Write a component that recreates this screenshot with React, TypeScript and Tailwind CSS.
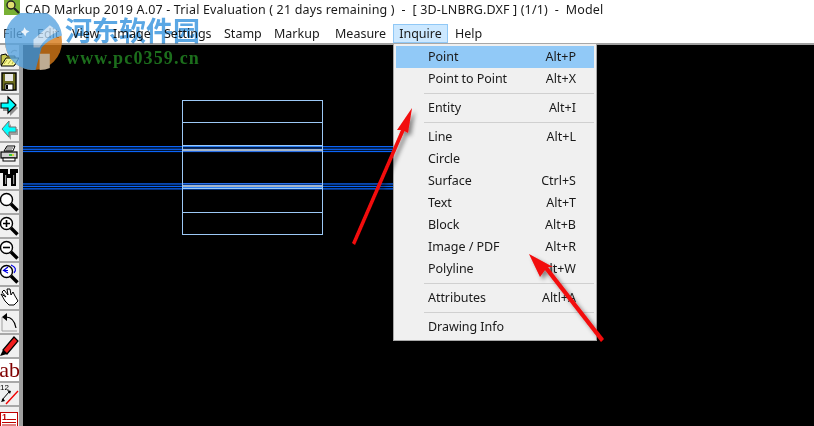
import React from "react";

const font = { fontFamily: '"Noto Sans", "Open Sans", sans-serif' };

function Btn({ children }: { children: React.ReactNode }) {
  return (
    <div className="h-[24px] w-[19px] shrink-0 bg-[#f0f0f0] border-b-2 border-[#a8a8a8] overflow-hidden">
      <svg width="19" height="22" viewBox="0 0 19 22" className="block">{children}</svg>
    </div>
  );
}

const Mag = ({ inner }: { inner?: React.ReactNode }) => (
  <g>
    <circle cx="6.5" cy="8.5" r="6" fill="#fff" stroke="#000" strokeWidth="1.4" />
    <path d="M11 13 L17.5 19.5" stroke="#000" strokeWidth="3.4" />
    {inner}
  </g>
);

function Toolbar() {
  return (
    <div className="w-[23px] shrink-0 flex flex-col pt-[2px] bg-[#f0f0f0] border-r-[4px] border-[#a0a0a0] overflow-hidden">
      <Btn>
        <path d="M11 6 Q13 2 17 4" fill="none" stroke="#999" strokeWidth="1.2" />
        <path d="M1 8 L6 7 L7 9 H15 V18 H1 Z" fill="#c8c850" stroke="#000" />
        <path d="M1 19 L6 11 H19 L14 19 Z" fill="#f8f890" stroke="#000" />
        <path d="M4 17 L7 13 M8 17 L11 13 M12 17 L14 13" stroke="#b0b040" />
      </Btn>
      <Btn>
        <rect x="2" y="2" width="14" height="17" fill="#6b6b20" stroke="#000" strokeWidth="1.4" />
        <rect x="5" y="3" width="8" height="7" fill="#e8e8e8" />
        <rect x="5" y="13" width="8" height="6" fill="#fff" stroke="#000" />
        <rect x="6" y="14" width="2" height="4" fill="#000" />
      </Btn>
      <Btn>
        <path d="M3 10 H10 V5 L18 13 L10 21 V16 H3 Z" fill="#909090" />
        <path d="M1 8 H8 V2 L16 10 L8 18 V13 H1 Z" fill="#00ffff" stroke="#000" strokeWidth="1.2" />
      </Btn>
      <Btn>
        <path d="M18 10 H11 V5 L4 13 L11 21 V16 H18 Z" fill="#a0a0a0" />
        <path d="M16 8 H9 V2 L2 10 L9 18 V13 H16 Z" fill="#00ffff" stroke="#707070" strokeWidth="1" />
      </Btn>
      <Btn>
        <path d="M4 8 L7 3 H15 L13 8 Z" fill="#fff" stroke="#000" />
        <path d="M6 5 H13 M6 7 H12" stroke="#000" strokeWidth="0.7" />
        <rect x="1" y="9" width="16" height="6" fill="#d0d0d0" stroke="#000" strokeWidth="1.2" />
        <rect x="3" y="15" width="12" height="3" fill="#fff" stroke="#000" />
        <rect x="9" y="11" width="3" height="2" fill="#3cc83c" />
        <rect x="12" y="11" width="2" height="2" fill="#d8d840" />
      </Btn>
      <Btn>
        <path d="M0 2 H8 V7 H10 V2 H18 V6 H16 V19 H11 V11 H7 V19 H3 V6 H0 Z" fill="#000" />
        <rect x="5" y="8" width="1.2" height="9" fill="#999" />
        <rect x="13" y="8" width="1.2" height="9" fill="#999" />
      </Btn>
      <Btn><Mag /></Btn>
      <Btn>
        <Mag inner={<path d="M3 8.5 H10 M6.5 5 V12" stroke="#000" strokeWidth="1.6" />} />
      </Btn>
      <Btn>
        <Mag inner={<path d="M3 8.5 H10" stroke="#000" strokeWidth="1.6" />} />
      </Btn>
      <Btn>
        <Mag
          inner={
            <path d="M8 4 L3.5 7.5 L8 10 M4 7.5 H8 M11 2 Q18 5 14 10" stroke="#0000e0" fill="none" strokeWidth="1.2" />
          }
        />
      </Btn>
      <Btn>
        <path
          d="M1 7 L6 10 L2 5 L4 3 L8 8 L7 2 L10 2 L11 8 L13 5 L15 9 L18 14 L14 18 H9 L5 14 Z"
          fill="#fff"
          stroke="#000"
          strokeWidth="1"
        />
      </Btn>
      <Btn>
        <path d="M2 6 V20 H17" fill="none" stroke="#a0a0a0" />
        <path d="M2 6 L7 2 V10 Z" fill="#000" />
        <path d="M6 6 Q14 6 16 17" fill="none" stroke="#000" strokeWidth="1.2" />
      </Btn>
      <Btn>
        <path d="M3 15 L14 2 L18 6 L7 19 Z" fill="#ee1c1c" stroke="#000" strokeWidth="1.2" />
        <path d="M3 15 L7 19 L0 21 Z" fill="#000" />
      </Btn>
      <div className="h-[24px] w-[19px] shrink-0 bg-white border-b-2 border-[#a8a8a8] overflow-hidden flex items-center justify-center">
        <span className="text-[#800000] text-[22px] leading-none" style={{ fontFamily: '"Liberation Serif", serif' }}>ab</span>
      </div>
      <Btn>
        <path d="M2 17 L9 9" stroke="#000" />
        <path d="M7 7 L11 8 L10 11 Z M1 19 L3 15 L5 18 Z" fill="#000" />
        <path d="M6 21 L18 8" stroke="#f00000" strokeWidth="1.4" />
        <text x="0" y="7" fontSize="8" fill="#000" fontFamily="Liberation Sans">12</text>
      </Btn>
      <Btn>
        <rect x="0.5" y="5.5" width="17" height="15" fill="#fff" stroke="#c00000" />
        <text x="2" y="13" fontSize="9" fill="#c00000" fontFamily="Liberation Sans" fontWeight="700">1</text>
        <path d="M7 12.5 H16 M2 15.5 H16 M2 18 H16" stroke="#c00000" />
      </Btn>
    </div>
  );
}

const MenuRow = ({ l, r, hi }: { l: string; r?: string; hi?: boolean }) => (
  <div className={`h-[22px] flex items-center justify-between pl-[32px] pr-[18px] ${hi ? "bg-[#91c9f7]" : ""}`}>
    <span className="tracking-[-0.05px]">{l}</span>
    <span>{r}</span>
  </div>
);
const Sep = () => (
  <div className="h-[7px] flex items-center pl-[28px]">
    <div className="h-px w-full bg-[#d0d0d0]" />
  </div>
);

function Menu() {
  return (
    <div className="absolute left-[393px] top-[43px] w-[204px] h-[298px] bg-[#f0f0f0] border border-[#a8a8a8] p-[2px] text-[12.5px] text-[#1a1a1a]">
      <MenuRow l="Point" r="Alt+P" hi />
      <MenuRow l="Point to Point" r="Alt+X" />
      <Sep />
      <MenuRow l="Entity" r="Alt+I" />
      <Sep />
      <MenuRow l="Line" r="Alt+L" />
      <MenuRow l="Circle" />
      <MenuRow l="Surface" r="Ctrl+S" />
      <MenuRow l="Text" r="Alt+T" />
      <MenuRow l="Block" r="Alt+B" />
      <MenuRow l="Image / PDF" r="Alt+R" />
      <MenuRow l="Polyline" r="Alt+W" />
      <Sep />
      <MenuRow l="Attributes" r="Altl+A" />
      <Sep />
      <MenuRow l="Drawing Info" />
    </div>
  );
}

function Drawing() {
  const lb = "#9cc8f5";
  const blue = "#0a64f8";
  return (
    <svg className="w-full h-full block" viewBox="23 45 791 381">
      {[146, 148.6, 150.8, 183.3, 185.8, 188.2].map((y) => (
        <rect key={y} x="23" y={y} width="370" height="1.3" fill={blue} />
      ))}
      <g shapeRendering="crispEdges">
        <rect x="182.5" y="100.5" width="140" height="134" fill="none" stroke={lb} strokeWidth="1" />
        {[122, 212].map((y) => (
          <rect key={y} x="182" y={y} width="140" height="1" fill={lb} />
        ))}
        <rect x="183" y="145" width="139" height="1" fill={lb} />
        <rect x="183" y="146" width="139" height="1" fill="#2a80f8" />
        <rect x="183" y="149" width="139" height="2" fill="#a4b4c8" />
        <rect x="183" y="151" width="139" height="1" fill="#2a70e8" />
        <rect x="183" y="183" width="139" height="1" fill="#2a70e8" />
        <rect x="183" y="185" width="139" height="2" fill="#a4b4c8" />
        <rect x="183" y="187" width="139" height="1" fill="#2a80f8" />
        <rect x="183" y="188" width="139" height="1" fill={lb} />
      </g>
    </svg>
  );
}

function Arrows() {
  return (
    <svg className="absolute left-0 top-0 pointer-events-none" width="814" height="426">
      <defs>
        <filter id="sh" x="-40%" y="-30%" width="180%" height="160%">
          <feDropShadow dx="3" dy="3" stdDeviation="2.2" floodColor="#000" floodOpacity="0.45" />
        </filter>
      </defs>
      <g fill="#f20a0a" filter="url(#sh)">
        <path d="M352 243 L401 130 L397 130 L412 108 L408 133 L404.5 131 L355 245 Z" />
        <path d="M601 342 L545 270 L540 277 L529 254 L553 267 L548 267 L604 339 Z" />
      </g>
    </svg>
  );
}

function Watermark() {
  return (
    <div className="absolute left-0 top-0 w-full h-[80px] pointer-events-none">
      <svg className="absolute left-[5px] top-[13px] opacity-80" width="57" height="57" viewBox="0 0 56 56">
        <circle cx="28" cy="28" r="28" fill="#d67a18" />
        <path d="M0 28 A28 28 0 0 1 56 22 Q42 26 36 34 L30 56 A28 28 0 0 1 0 28 Z" fill="#5aa5e0" />
        <path d="M28 26 L44 12 L52 18 Q40 24 34 34 L28 34 Z" fill="#e4eef8" opacity="0.75" />
        <path d="M34 40 H44 V54 Q40 56 34 56 Z" fill="#eed8b8" />
        <path d="M19 14 L21 17 L24 18 L21 20 L20 23 L18 20 L15 19 L18 17 Z" fill="#e8f2fb" />
      </svg>
      <div
        className="absolute left-[65px] top-[11px] whitespace-nowrap text-[27px] font-bold leading-[38px] text-[#5aa7e4] mix-blend-multiply"
        style={{ fontFamily: '"Noto Sans CJK SC", sans-serif' }}
      >
        河东软件园
      </div>
      <div
        className="absolute left-[66px] top-[48px] whitespace-nowrap text-[18px] font-bold leading-[20px] text-[#1c6e1c] tracking-[1.15px]"
        style={{ fontFamily: '"Liberation Serif", serif' }}
      >
        www.pc0359.cn
      </div>
    </div>
  );
}

const menus: [string, string][] = [
  ["File", "w-[34px]"],
  ["Edit", "w-[35px]"],
  ["View", "w-[41px]"],
  ["Image", "w-[51px]"],
  ["Settings", "w-[60px]"],
  ["Stamp", "w-[50px]"],
  ["Markup", "w-[61px]"],
  ["Measure", "w-[58px]"],
];

export default function App() {
  return (
    <div className="relative w-[814px] h-[426px] overflow-hidden bg-black flex flex-col text-[12.5px] text-[#1a1a1a]" style={font}>
      <div className="h-[20px] shrink-0 bg-white flex items-center overflow-hidden">
        <svg className="ml-[4px] mt-[-6px] shrink-0" width="16" height="16" viewBox="0 0 16 16">
          <rect width="16" height="16" fill="#78b034" />
          <circle cx="7" cy="6" r="4" fill="#e0e070" stroke="#222" strokeWidth="1.4" />
          <path d="M10 9 L15 14" stroke="#222" strokeWidth="2.2" />
        </svg>
        <span className="ml-[5px] whitespace-pre tracking-[0.16px]">CAD Markup 2019 A.07 - Trial Evaluation ( 21 days remaining )  -  [ 3D-LNBRG.DXF ] (1/1)  -  Model</span>
      </div>
      <div className="h-[23px] shrink-0 bg-white flex items-stretch pt-[4px] pl-[3px]">
        {menus.map(([m, w]) => (
          <span key={m} className={`${w} shrink-0 leading-[19px]`}>{m}</span>
        ))}
        <span className="w-[55px] shrink-0 border border-[#90c8f6] bg-[#cce8ff] text-center leading-[17px]">Inquire</span>
        <span className="pl-[7px] leading-[19px]">Help</span>
      </div>
      <div className="h-[2px] shrink-0 bg-[#a0a0a0]" />
      <div className="flex-1 min-h-0 flex">
        <Toolbar />
        <div className="flex-1 min-w-0 bg-black">
          <Drawing />
        </div>
      </div>
      <Menu />
      <Watermark />
      <Arrows />
    </div>
  );
}
